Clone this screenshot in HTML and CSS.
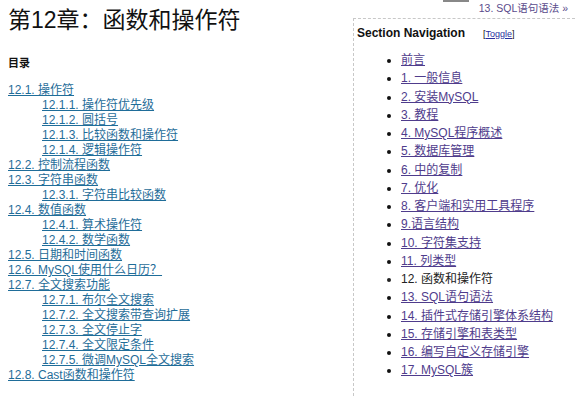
FILE: index.html
```html
<!DOCTYPE html>
<html lang="zh-CN">
<head>
    <meta charset="UTF-8">
    <title>第12章：函数和操作符</title>
    <link rel="stylesheet" href="styles.css">
</head>
<body>
    <div class="page">
        <div class="main">
            <h1>第12章：函数和操作符</h1>
            <p class="toc-title">目录</p>
            <ul class="toc">
                <li><a href="#">12.1. 操作符</a>
                    <ul>
                        <li><a href="#">12.1.1. 操作符优先级</a></li>
                        <li><a href="#">12.1.2. 圆括号</a></li>
                        <li><a href="#">12.1.3. 比较函数和操作符</a></li>
                        <li><a href="#">12.1.4. 逻辑操作符</a></li>
                    </ul>
                </li>
                <li><a href="#">12.2. 控制流程函数</a></li>
                <li><a href="#">12.3. 字符串函数</a>
                    <ul>
                        <li><a href="#">12.3.1. 字符串比较函数</a></li>
                    </ul>
                </li>
                <li><a href="#">12.4. 数值函数</a>
                    <ul>
                        <li><a href="#">12.4.1. 算术操作符</a></li>
                        <li><a href="#">12.4.2. 数学函数</a></li>
                    </ul>
                </li>
                <li><a href="#">12.5. 日期和时间函数</a></li>
                <li><a href="#">12.6. MySQL使用什么日历？</a></li>
                <li><a href="#">12.7. 全文搜索功能</a>
                    <ul>
                        <li><a href="#">12.7.1. 布尔全文搜索</a></li>
                        <li><a href="#">12.7.2. 全文搜索带查询扩展</a></li>
                        <li><a href="#">12.7.3. 全文停止字</a></li>
                        <li><a href="#">12.7.4. 全文限定条件</a></li>
                        <li><a href="#">12.7.5. 微调MySQL全文搜索</a></li>
                    </ul>
                </li>
                <li><a href="#">12.8. Cast函数和操作符</a></li>
            </ul>
        </div>

        <div class="side">
            <div class="tab"></div>
            <div class="next"><a href="#">13. SQL语句语法 »</a></div>
            <div class="nav-box">
                <div class="nav-head">
                    <span class="nav-title">Section Navigation</span>
                    <span class="toggle">[<a href="#">Toggle</a>]</span>
                </div>
                <ul class="nav-list">
                    <li><a href="#">前言</a></li>
                    <li><a href="#">1. 一般信息</a></li>
                    <li><a href="#">2. 安装MySQL</a></li>
                    <li><a href="#">3. 教程</a></li>
                    <li><a href="#">4. MySQL程序概述</a></li>
                    <li><a href="#">5. 数据库管理</a></li>
                    <li><a href="#">6. 中的复制</a></li>
                    <li><a href="#">7. 优化</a></li>
                    <li><a href="#">8. 客户端和实用工具程序</a></li>
                    <li><a href="#">9.语言结构</a></li>
                    <li><a href="#">10. 字符集支持</a></li>
                    <li><a href="#">11. 列类型</a></li>
                    <li class="current">12. 函数和操作符</li>
                    <li><a href="#">13. SQL语句语法</a></li>
                    <li><a href="#">14. 插件式存储引擎体系结构</a></li>
                    <li><a href="#">15. 存储引擎和表类型</a></li>
                    <li><a href="#">16. 编写自定义存储引擎</a></li>
                    <li><a href="#">17. MySQL簇</a></li>
                </ul>
            </div>
        </div>
    </div>
</body>
</html>
```

FILE: styles.css
```css
:root {
    --link-color: #1f6d99;
    --visited-color: #4f3c8c;
    --dash-color: #c8c8c8;
}

body {
    margin: 0;
    font-family: "Liberation Sans", "Noto Sans CJK SC", sans-serif;
    font-size: 12px;
    color: #111;
    background: #fff;
}

.page {
    display: flex;
    height: 396px;
    overflow: hidden;
}

.main {
    width: 345px;
    padding-left: 8px;
}

h1 {
    margin: 6px 0 0;
    font-size: 23px;
    font-weight: normal;
    line-height: 28px;
}

.toc-title {
    margin: 21px 0 0;
    font-size: 11px;
    font-weight: bold;
    line-height: 16px;
}

.toc,
.toc ul {
    list-style: none;
    margin: 0;
    padding: 0;
}

.toc {
    margin-top: 12px;
}

.toc ul {
    padding-left: 34px;
}

.toc li {
    line-height: 15px;
}

.toc a {
    color: var(--link-color);
}

.side {
    flex: 1;
    position: relative;
    display: flex;
    flex-direction: column;
    padding-right: 5px;
}

.tab {
    position: absolute;
    top: 0;
    left: 90px;
    width: 26px;
    height: 2px;
    background: #888;
}

.next {
    height: 18px;
    font-size: 10.5px;
    line-height: 17px;
    text-align: right;
    padding-right: 7px;
}

.next a {
    color: #5a4b8c;
    text-decoration: none;
}

.nav-box {
    flex: 1;
    border-top: 1px dashed var(--dash-color);
    border-left: 1px dashed var(--dash-color);
    padding: 6px 0 0 3px;
}

.nav-head {
    display: flex;
    align-items: baseline;
    line-height: 16px;
}

.nav-title {
    font-weight: bold;
    width: 126px;
}

.toggle {
    font-size: 9px;
}

.toggle a {
    color: #2a2f9e;
}

.nav-list {
    margin: 9px 0 0;
    padding-left: 44px;
}

.nav-list li {
    line-height: 18.25px;
}

.nav-list a {
    color: var(--visited-color);
}

.nav-list .current {
    color: #222;
}
```
